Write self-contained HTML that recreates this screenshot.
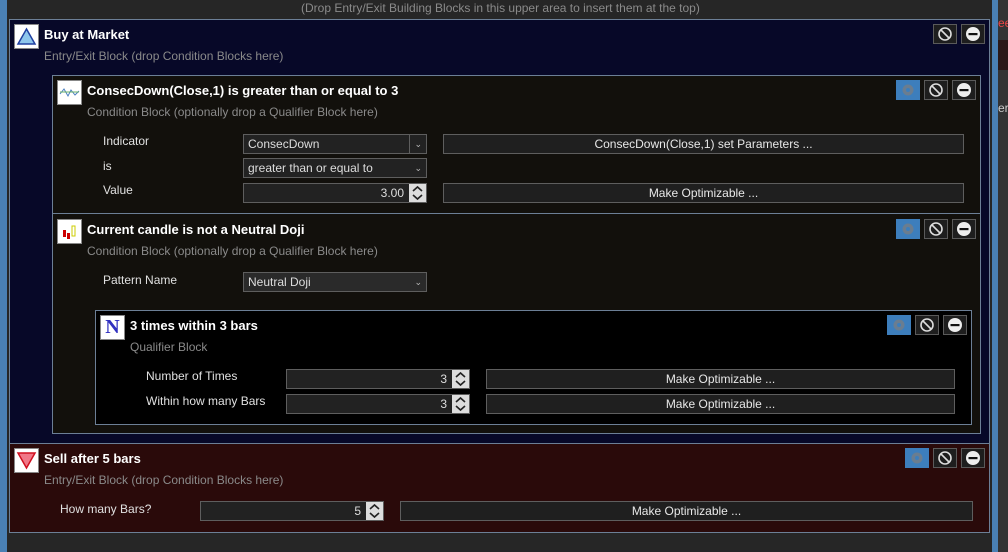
<!DOCTYPE html>
<html><head><meta charset="utf-8"><style>
*{box-sizing:border-box;margin:0;padding:0}
body{width:1008px;height:552px;background:#262626;position:relative;overflow:hidden;font-family:"Liberation Sans","DejaVu Sans",sans-serif;font-size:12px;color:#e8e8e8}
.a{position:absolute}
.blk{position:absolute;border:1px solid #6c7f96}
.t{position:absolute;font-weight:bold;font-size:13px;color:#fff;white-space:nowrap}
.s{position:absolute;color:#8a8a8a;font-size:12px;white-space:nowrap}
.l{position:absolute;color:#e0e0e0;font-size:12px;white-space:nowrap}
.ic{position:absolute;width:25px;height:25px;background:#fff;border:1px solid #888}
.bt{position:absolute;width:24px;height:20px;border:1px solid #5a5a5a;background:#1e1e1e}
.g{background:#3d7ebc;border-color:#3d7ebc}
.in{position:absolute;height:20px;background:#222;border:1px solid #5e5e5e;color:#ddd;font-size:12px;line-height:18px;padding:0 4px;white-space:nowrap}
.btn{position:absolute;height:20px;background:#1f1f1f;border:1px solid #5e5e5e;color:#e8e8e8;font-size:12px;line-height:18px;text-align:center;white-space:nowrap}
.sp{position:absolute;right:0;top:0;width:17px;height:18px;background:#ddd;line-height:0}
.dd{position:absolute;right:4px;top:0;color:#bbb;font-size:9px}
</style></head><body>
<div class="a" style="left:0;top:0;width:7px;height:552px;background:#4a80b4"></div>
<div class="a" style="left:7px;top:0;width:983px;height:552px;background:#262626"></div>
<div class="a" style="left:992px;top:0;width:6px;height:552px;background:#4a80b4"></div>
<div class="a" style="left:998px;top:0;width:10px;height:552px;background:#333"></div>
<div class="a" style="left:998px;top:40px;width:10px;height:30px;background:#2a1818"></div>
<div class="a" style="left:998px;top:16px;color:#e44;font-size:12px">ee</div>
<div class="a" style="left:998px;top:101px;color:#ccc;font-size:12px">erv</div>
<div class="s" style="left:301px;top:1px;color:#8a8a8a">(Drop Entry/Exit Building Blocks in this upper area to insert them at the top)</div>

<div class="blk" style="left:9px;top:19px;width:981px;height:425px;background:#070828"></div>
<div class="ic" style="left:14px;top:24px"><svg width="23" height="23"><polygon points="11.5,4 20,19 3,19" fill="#8ec6ec" stroke="#2040a0" stroke-width="1.5"/></svg></div>
<div class="t" style="left:44px;top:27px">Buy at Market</div>
<div class="s" style="left:44px;top:49px">Entry/Exit Block (drop Condition Blocks here)</div>
<div class="bt" style="left:933px;top:24px"><svg width="22" height="18"><circle cx="11" cy="9" r="6" fill="none" stroke="#ddd" stroke-width="1.6"/><line x1="7" y1="5" x2="15" y2="13" stroke="#ddd" stroke-width="1.6"/></svg></div>
<div class="bt" style="left:961px;top:24px"><svg width="22" height="18"><circle cx="11" cy="9" r="7" fill="#eee"/><rect x="6.5" y="8" width="9" height="2.2" fill="#111"/></svg></div>

<div class="blk" style="left:52px;top:75px;width:929px;height:139px;background:#12100c"></div>
<div class="ic" style="left:57px;top:80px"><svg width="23" height="23"><path d="M2 13 L6 8 L10 15 L13 9 L17 14 L21 10" stroke="#4a7fc0" fill="none"/><path d="M2 11 H21" stroke="#6ab06a" stroke-width="1"/></svg></div>
<div class="t" style="left:87px;top:83px">ConsecDown(Close,1) is greater than or equal to 3</div>
<div class="s" style="left:87px;top:105px">Condition Block (optionally drop a Qualifier Block here)</div>
<div class="bt g" style="left:896px;top:80px"><svg width="22" height="18"><circle cx="11" cy="9" r="5.5" fill="#6a7d90"/><circle cx="11" cy="9" r="2" fill="#3d7ebc"/></svg></div>
<div class="bt" style="left:924px;top:80px"><svg width="22" height="18"><circle cx="11" cy="9" r="6" fill="none" stroke="#ddd" stroke-width="1.6"/><line x1="7" y1="5" x2="15" y2="13" stroke="#ddd" stroke-width="1.6"/></svg></div>
<div class="bt" style="left:952px;top:80px"><svg width="22" height="18"><circle cx="11" cy="9" r="7" fill="#eee"/><rect x="6.5" y="8" width="9" height="2.2" fill="#111"/></svg></div>
<div class="l" style="left:103px;top:134px">Indicator</div>
<div class="l" style="left:103px;top:159px">is</div>
<div class="l" style="left:103px;top:183px">Value</div>
<div class="in" style="left:243px;top:134px;width:184px">ConsecDown<span style="position:absolute;left:165px;top:0;width:1px;height:18px;background:#5e5e5e"></span><span class="dd">&#8964;</span></div>
<div class="in" style="left:243px;top:158px;width:184px">greater than or equal to<span class="dd">&#8964;</span></div>
<div class="in" style="left:243px;top:183px;width:184px;text-align:right;padding-right:22px">3.00<span class="sp"><svg width="17" height="18"><path d="M4 7 L8.5 3 L13 7" fill="none" stroke="#222" stroke-width="1.6"/><path d="M4 11 L8.5 15 L13 11" fill="none" stroke="#222" stroke-width="1.6"/></svg></span></div>
<div class="btn" style="left:443px;top:134px;width:521px">ConsecDown(Close,1) set Parameters ...</div>
<div class="btn" style="left:443px;top:183px;width:521px">Make Optimizable ...</div>

<div class="blk" style="left:52px;top:213px;width:929px;height:221px;background:#12100c"></div>
<div class="ic" style="left:57px;top:219px"><svg width="23" height="23"><rect x="5" y="10" width="3" height="7" fill="#c00"/><rect x="9" y="13" width="3" height="6" fill="#c00"/><rect x="14" y="6" width="3" height="10" fill="none" stroke="#cc0"/></svg></div>
<div class="t" style="left:87px;top:222px">Current candle is not a Neutral Doji</div>
<div class="s" style="left:87px;top:244px">Condition Block (optionally drop a Qualifier Block here)</div>
<div class="bt g" style="left:896px;top:219px"><svg width="22" height="18"><circle cx="11" cy="9" r="5.5" fill="#6a7d90"/><circle cx="11" cy="9" r="2" fill="#3d7ebc"/></svg></div>
<div class="bt" style="left:924px;top:219px"><svg width="22" height="18"><circle cx="11" cy="9" r="6" fill="none" stroke="#ddd" stroke-width="1.6"/><line x1="7" y1="5" x2="15" y2="13" stroke="#ddd" stroke-width="1.6"/></svg></div>
<div class="bt" style="left:952px;top:219px"><svg width="22" height="18"><circle cx="11" cy="9" r="7" fill="#eee"/><rect x="6.5" y="8" width="9" height="2.2" fill="#111"/></svg></div>
<div class="l" style="left:103px;top:273px">Pattern Name</div>
<div class="in" style="left:243px;top:272px;width:184px;background:#2a2a2a">Neutral Doji<span class="dd">&#8964;</span></div>

<div class="blk" style="left:95px;top:310px;width:877px;height:115px;background:#000"></div>
<div class="ic" style="left:100px;top:315px;text-align:center;font-family:'Liberation Serif',serif;font-weight:bold;font-size:20px;color:#3030c0;line-height:23px">N</div>
<div class="t" style="left:130px;top:318px">3 times within 3 bars</div>
<div class="s" style="left:130px;top:340px">Qualifier Block</div>
<div class="bt g" style="left:887px;top:315px"><svg width="22" height="18"><circle cx="11" cy="9" r="5.5" fill="#6a7d90"/><circle cx="11" cy="9" r="2" fill="#3d7ebc"/></svg></div>
<div class="bt" style="left:915px;top:315px"><svg width="22" height="18"><circle cx="11" cy="9" r="6" fill="none" stroke="#ddd" stroke-width="1.6"/><line x1="7" y1="5" x2="15" y2="13" stroke="#ddd" stroke-width="1.6"/></svg></div>
<div class="bt" style="left:943px;top:315px"><svg width="22" height="18"><circle cx="11" cy="9" r="7" fill="#eee"/><rect x="6.5" y="8" width="9" height="2.2" fill="#111"/></svg></div>
<div class="l" style="left:146px;top:369px">Number of Times</div>
<div class="l" style="left:146px;top:394px">Within how many Bars</div>
<div class="in" style="left:286px;top:369px;width:184px;text-align:right;padding-right:22px">3<span class="sp"><svg width="17" height="18"><path d="M4 7 L8.5 3 L13 7" fill="none" stroke="#222" stroke-width="1.6"/><path d="M4 11 L8.5 15 L13 11" fill="none" stroke="#222" stroke-width="1.6"/></svg></span></div>
<div class="in" style="left:286px;top:394px;width:184px;text-align:right;padding-right:22px">3<span class="sp"><svg width="17" height="18"><path d="M4 7 L8.5 3 L13 7" fill="none" stroke="#222" stroke-width="1.6"/><path d="M4 11 L8.5 15 L13 11" fill="none" stroke="#222" stroke-width="1.6"/></svg></span></div>
<div class="btn" style="left:486px;top:369px;width:469px">Make Optimizable ...</div>
<div class="btn" style="left:486px;top:394px;width:469px">Make Optimizable ...</div>

<div class="blk" style="left:9px;top:443px;width:981px;height:90px;background:#2a0a0a"></div>
<div class="ic" style="left:14px;top:448px"><svg width="23" height="23"><polygon points="3,4 20,4 11.5,19" fill="#f07888" stroke="#d01020" stroke-width="1.5"/></svg></div>
<div class="t" style="left:44px;top:451px">Sell after 5 bars</div>
<div class="s" style="left:44px;top:473px">Entry/Exit Block (drop Condition Blocks here)</div>
<div class="bt g" style="left:905px;top:448px"><svg width="22" height="18"><circle cx="11" cy="9" r="5.5" fill="#6a7d90"/><circle cx="11" cy="9" r="2" fill="#3d7ebc"/></svg></div>
<div class="bt" style="left:933px;top:448px"><svg width="22" height="18"><circle cx="11" cy="9" r="6" fill="none" stroke="#ddd" stroke-width="1.6"/><line x1="7" y1="5" x2="15" y2="13" stroke="#ddd" stroke-width="1.6"/></svg></div>
<div class="bt" style="left:961px;top:448px"><svg width="22" height="18"><circle cx="11" cy="9" r="7" fill="#eee"/><rect x="6.5" y="8" width="9" height="2.2" fill="#111"/></svg></div>
<div class="l" style="left:60px;top:502px">How many Bars?</div>
<div class="in" style="left:200px;top:501px;width:184px;text-align:right;padding-right:22px">5<span class="sp"><svg width="17" height="18"><path d="M4 7 L8.5 3 L13 7" fill="none" stroke="#222" stroke-width="1.6"/><path d="M4 11 L8.5 15 L13 11" fill="none" stroke="#222" stroke-width="1.6"/></svg></span></div>
<div class="btn" style="left:400px;top:501px;width:573px">Make Optimizable ...</div>
</body></html>
